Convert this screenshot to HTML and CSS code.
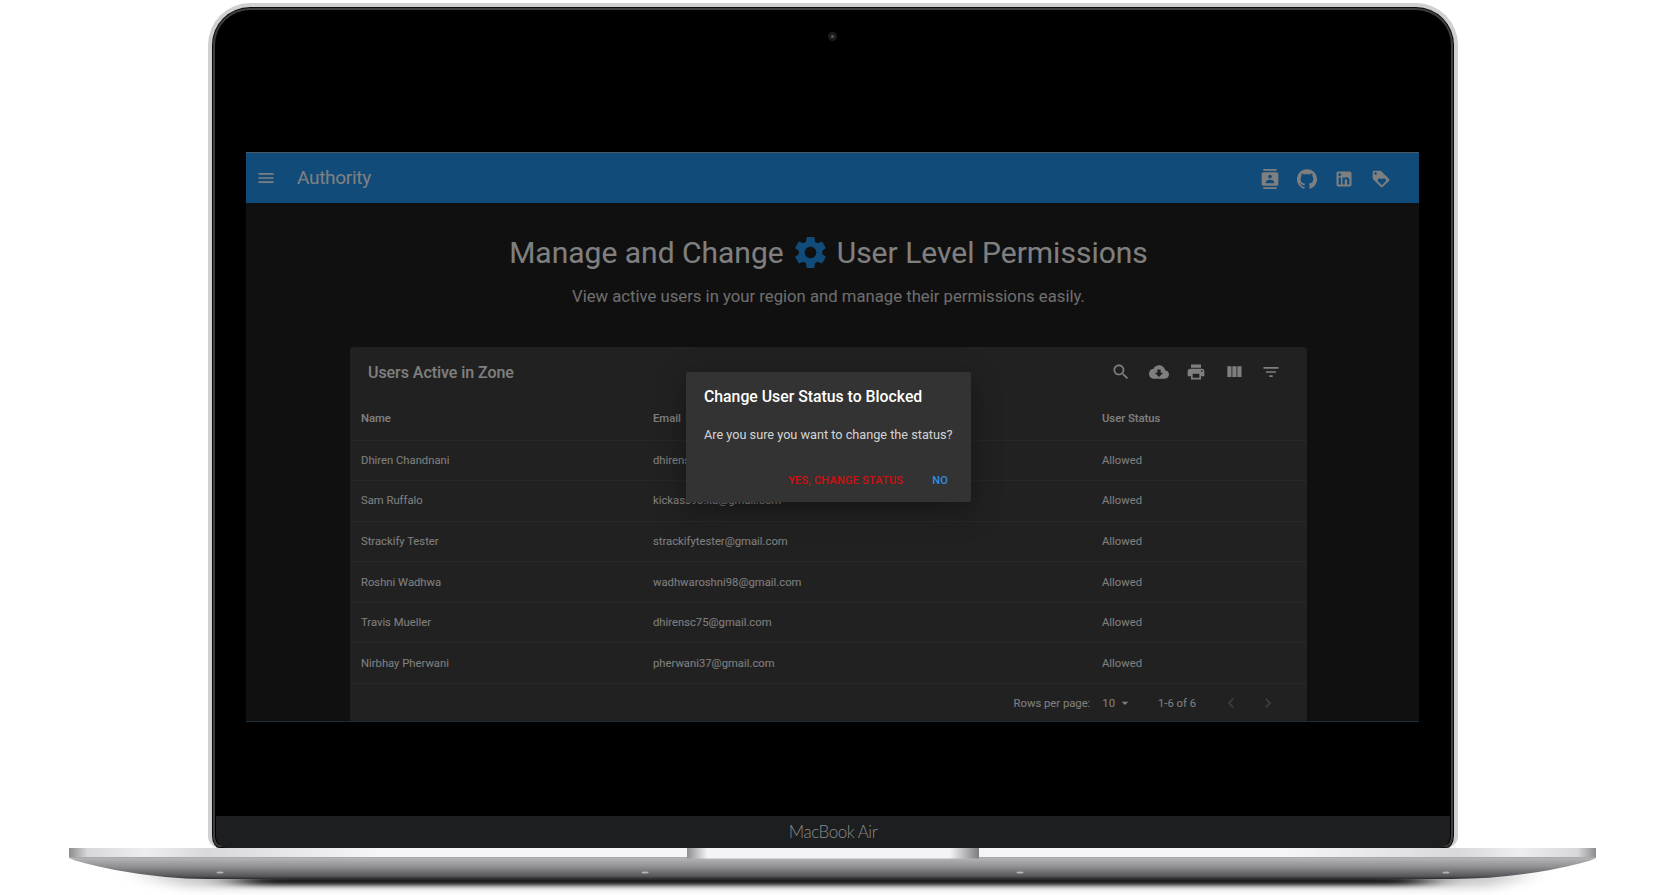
FILE: index.html
```html
<!DOCTYPE html>
<html lang="en">
<head>
  <meta charset="UTF-8">
  <meta name="viewport" content="width=device-width, initial-scale=1.0">
  <title>Authority</title>
  <link rel="stylesheet" href="styles.css">
</head>
<body>
  <div class="laptop">
    <div class="lid">
      <div class="bezel">
        <div class="camera"></div>
        <div class="app">
          <header class="appbar">
            <svg class="icon" viewBox="0 0 24 24"><path d="M3 18h18v-2H3v2zm0-5h18v-2H3v2zm0-7v2h18V6H3z"/></svg>
            <span class="brand">Authority</span>
            <nav class="appbar-links">
              <svg class="icon" viewBox="0 0 24 24"><path d="M20 0H4v2h16V0zM4 24h16v-2H4v2zM20 4H4c-1.1 0-2 .9-2 2v12c0 1.1.9 2 2 2h16c1.1 0 2-.9 2-2V6c0-1.1-.9-2-2-2zm-8 2.75c1.24 0 2.25 1.01 2.25 2.25s-1.01 2.25-2.25 2.25S9.75 10.24 9.75 9 10.76 6.75 12 6.75zM17 17H7v-1.5c0-1.67 3.33-2.5 5-2.5s5 .83 5 2.5V17z"/></svg>
              <svg class="icon" viewBox="0 0 24 24"><path d="M12 .3a12 12 0 0 0-3.8 23.4c.6.1.8-.3.8-.6v-2c-3.3.7-4-1.6-4-1.6-.6-1.4-1.4-1.8-1.4-1.8-1-.7.1-.7.1-.7 1.2 0 1.9 1.2 1.9 1.2 1 1.8 2.8 1.3 3.5 1 0-.8.4-1.3.7-1.6-2.7-.3-5.5-1.3-5.5-6 0-1.2.5-2.3 1.3-3.1-.2-.4-.6-1.6 0-3.2 0 0 1-.3 3.4 1.2a11.5 11.5 0 0 1 6 0c2.3-1.5 3.3-1.2 3.3-1.2.6 1.6.2 2.8 0 3.2.9.8 1.3 1.9 1.3 3.2 0 4.6-2.8 5.6-5.5 5.9.5.4.9 1 .9 2.2v3.3c0 .3.1.7.8.6A12 12 0 0 0 12 .3"/></svg>
              <svg class="icon" viewBox="0 0 24 24"><path d="M19 3a2 2 0 0 1 2 2v14a2 2 0 0 1-2 2H5a2 2 0 0 1-2-2V5a2 2 0 0 1 2-2h14m-.5 15.5v-5.3a3.26 3.26 0 0 0-3.26-3.26c-.85 0-1.84.52-2.32 1.3v-1.11h-2.79v8.37h2.79v-4.93c0-.77.62-1.4 1.39-1.4a1.4 1.4 0 0 1 1.4 1.4v4.93h2.79M6.88 8.56a1.68 1.68 0 0 0 1.68-1.68c0-.93-.75-1.69-1.68-1.69a1.69 1.69 0 0 0-1.69 1.69c0 .93.76 1.68 1.69 1.68m1.39 9.94v-8.37H5.5v8.37h2.77z"/></svg>
              <svg class="icon" viewBox="0 0 24 24"><path d="M21.41 11.58l-9-9C12.05 2.22 11.55 2 11 2H4c-1.1 0-2 .9-2 2v7c0 .55.22 1.05.59 1.42l9 9c.36.36.86.58 1.41.58.55 0 1.05-.22 1.41-.59l7-7c.37-.36.59-.86.59-1.41 0-.55-.23-1.06-.59-1.42zM5.5 7C4.67 7 4 6.33 4 5.5S4.67 4 5.5 4 7 4.67 7 5.5 6.33 7 5.5 7zm11.77 8.27L13 19.54l-4.27-4.27C8.28 14.81 8 14.19 8 13.5c0-1.38 1.12-2.5 2.5-2.5.69 0 1.32.28 1.77.74l.73.72.73-.73c.45-.45 1.08-.73 1.77-.73 1.38 0 2.5 1.12 2.5 2.5 0 .69-.28 1.32-.73 1.77z"/></svg>
            </nav>
          </header>

          <main class="content">
            <h1 class="title">
              <span>Manage and Change</span>
              <svg class="gear" viewBox="0 0 24 24"><path d="M19.14 12.94c.04-.3.06-.61.06-.94 0-.32-.02-.64-.07-.94l2.03-1.58c.18-.14.23-.41.12-.61l-1.92-3.32c-.12-.22-.37-.29-.59-.22l-2.39.96c-.5-.38-1.03-.7-1.62-.94l-.36-2.54c-.04-.24-.24-.41-.48-.41h-3.84c-.24 0-.43.17-.47.41l-.36 2.54c-.59.24-1.13.57-1.62.94l-2.39-.96c-.22-.08-.47 0-.59.22L2.74 8.87c-.12.21-.08.47.12.61l2.03 1.58c-.05.3-.09.63-.09.94s.02.64.07.94l-2.03 1.58c-.18.14-.23.41-.12.61l1.92 3.32c.12.22.37.29.59.22l2.39-.96c.5.38 1.03.7 1.62.94l.36 2.54c.05.24.24.41.48.41h3.84c.24 0 .44-.17.47-.41l.36-2.54c.59-.24 1.13-.56 1.62-.94l2.39.96c.22.08.47 0 .59-.22l1.92-3.32c.12-.22.07-.47-.12-.61l-2.01-1.58zM12 15.6c-1.98 0-3.6-1.62-3.6-3.6s1.62-3.6 3.6-3.6 3.6 1.62 3.6 3.6-1.62 3.6-3.6 3.6z"/></svg>
              <span>User Level Permissions</span>
            </h1>
            <p class="subtitle">View active users in your region and manage their permissions easily.</p>

            <section class="card">
              <div class="toolbar">
                <h2 class="card-title">Users Active in Zone</h2>
                <div class="tools">
                  <svg class="icon" viewBox="0 0 24 24"><path d="M15.5 14h-.79l-.28-.27C15.41 12.59 16 11.11 16 9.5 16 5.91 13.09 3 9.5 3S3 5.91 3 9.5 5.91 16 9.5 16c1.61 0 3.09-.59 4.23-1.57l.27.28v.79l5 4.99L20.49 19l-4.99-5zm-6 0C7.01 14 5 11.99 5 9.5S7.01 5 9.5 5 14 7.01 14 9.5 11.99 14 9.5 14z"/></svg>
                  <svg class="icon" viewBox="0 0 24 24"><path d="M19.35 10.04C18.67 6.59 15.64 4 12 4 9.11 4 6.6 5.64 5.35 8.04 2.34 8.36 0 10.91 0 14c0 3.31 2.69 6 6 6h13c2.76 0 5-2.24 5-5 0-2.64-2.05-4.78-4.65-4.96zM17 13l-5 5-5-5h3V9h4v4h3z"/></svg>
                  <svg class="icon" viewBox="0 0 24 24"><path d="M19 8H5c-1.66 0-3 1.34-3 3v6h4v4h12v-4h4v-6c0-1.66-1.34-3-3-3zm-3 11H8v-5h8v5zm3-7c-.55 0-1-.45-1-1s.45-1 1-1 1 .45 1 1-.45 1-1 1zm-1-9H6v4h12V3z"/></svg>
                  <svg class="icon" viewBox="0 0 24 24"><path d="M10 18h5V5h-5v13zm-6 0h5V5H4v13zM16 5v13h5V5h-5z"/></svg>
                  <svg class="icon" viewBox="0 0 24 24"><path d="M10 18h4v-2h-4v2zM3 6v2h18V6H3zm3 7h12v-2H6v2z"/></svg>
                </div>
              </div>

              <table class="users">
                <thead>
                  <tr><th class="col-name">Name</th><th class="col-email">Email</th><th>User Status</th></tr>
                </thead>
                <tbody>
                  <tr><td>Dhiren Chandnani</td><td>dhirensc75@gmail.com</td><td>Allowed</td></tr>
                  <tr><td>Sam Ruffalo</td><td>kickass90.ka@gmail.com</td><td>Allowed</td></tr>
                  <tr><td>Strackify Tester</td><td>strackifytester@gmail.com</td><td>Allowed</td></tr>
                  <tr><td>Roshni Wadhwa</td><td>wadhwaroshni98@gmail.com</td><td>Allowed</td></tr>
                  <tr><td>Travis Mueller</td><td>dhirensc75@gmail.com</td><td>Allowed</td></tr>
                  <tr><td>Nirbhay Pherwani</td><td>pherwani37@gmail.com</td><td>Allowed</td></tr>
                </tbody>
              </table>

              <div class="pager">
                <span>Rows per page:</span>
                <span class="pager-size">10
                  <svg class="caret" viewBox="0 0 24 24"><path d="M7 10l5 5 5-5z"/></svg>
                </span>
                <span class="pager-range">1-6 of 6</span>
                <svg class="icon chevron" viewBox="0 0 24 24"><path d="M15.41 7.41L14 6l-6 6 6 6 1.41-1.41L10.83 12z"/></svg>
                <svg class="icon chevron" viewBox="0 0 24 24"><path d="M10 6L8.59 7.41 13.17 12l-4.58 4.59L10 18l6-6z"/></svg>
              </div>
            </section>
          </main>

          <div class="backdrop"></div>
          <div class="dialog">
            <h3 class="dialog-title">Change User Status to Blocked</h3>
            <p class="dialog-text">Are you sure you want to change the status?</p>
            <div class="dialog-actions">
              <span class="btn-danger">YES, CHANGE STATUS</span>
              <span class="btn-primary">NO</span>
            </div>
          </div>
        </div>
      </div>
      <div class="chin">MacBook Air</div>
    </div>

    <svg class="base" viewBox="0 0 1666 47">
      <defs>
        <linearGradient id="strip" x1="0" x2="1" y1="0" y2="0">
          <stop offset="0" stop-color="#8d8d8f"/>
          <stop offset=".012" stop-color="#d8d8da"/>
          <stop offset=".05" stop-color="#eeeef0"/>
          <stop offset=".09" stop-color="#d9d9db"/>
          <stop offset=".2" stop-color="#f5f5f7"/>
          <stop offset=".8" stop-color="#f5f5f7"/>
          <stop offset=".91" stop-color="#d9d9db"/>
          <stop offset=".95" stop-color="#eeeef0"/>
          <stop offset=".988" stop-color="#d8d8da"/>
          <stop offset="1" stop-color="#8d8d8f"/>
        </linearGradient>
        <linearGradient id="notch" x1="0" x2="1" y1="0" y2="0">
          <stop offset="0" stop-color="#8e8e90"/>
          <stop offset=".07" stop-color="#f4f4f6"/>
          <stop offset=".9" stop-color="#f4f4f6"/>
          <stop offset="1" stop-color="#7d7d7f"/>
        </linearGradient>
        <linearGradient id="body" x1="0" x2="0" y1="0" y2="1">
          <stop offset="0" stop-color="#bdbdbf"/>
          <stop offset=".45" stop-color="#929295"/>
          <stop offset=".88" stop-color="#555659"/>
          <stop offset="1" stop-color="#2a2a2c"/>
        </linearGradient>
        <filter id="soft-wide" filterUnits="userSpaceOnUse" x="0" y="0" width="1666" height="47">
          <feGaussianBlur stdDeviation="14 6"/>
        </filter>
        <filter id="soft" filterUnits="userSpaceOnUse" x="0" y="0" width="1666" height="47">
          <feGaussianBlur stdDeviation="20 2.500"/>
        </filter>
      </defs>
      <path d="M130 24 H1536 L1490 38 H190 Z" fill="#000" opacity=".25" filter="url(#soft-wide)"/>
      <rect x="240" y="29" width="1186" height="8" fill="#000" filter="url(#soft)" opacity=".95"/>
      <path d="M69 8 H1596 V10 Q1590 14 1550 22 Q1500 31 1451 31 H208 Q165 31 115 22 Q76 14 69 10 Z" fill="url(#body)"/>
      <rect x="69" y="0" width="1527" height="9.500" fill="url(#strip)"/>
      <rect x="69" y="9" width="1527" height="1" fill="#a9a9ab"/>
      <rect x="687" y="0" width="292" height="10.500" fill="url(#notch)"/>
      <g fill="#b4b4b6">
        <ellipse cx="220" cy="24.500" rx="3.500" ry="1"/>
        <ellipse cx="645" cy="24.500" rx="3.500" ry="1"/>
        <ellipse cx="1020" cy="24.500" rx="3.500" ry="1"/>
        <ellipse cx="1446" cy="24.500" rx="3.500" ry="1"/>
      </g>
    </svg>
  </div>
</body>
</html>
```

FILE: styles.css
```css
* {
  margin: 0;
  padding: 0;
  box-sizing: border-box;
}

body {
  background: #fff;
  font-family: Roboto, "Liberation Sans", sans-serif;
  overflow: hidden;
}

.laptop {
  width: 1666px;
  height: 895px;
  padding-top: 3px;
  display: flex;
  flex-direction: column;
  align-items: center;
}

/* Lid */
.lid {
  width: 1250px;
  height: 845px;
  display: flex;
  flex-direction: column;
  background: #000;
  border: 4px solid #d0d0d2;
  border-bottom: none;
  border-radius: 42px 42px 12px 12px;
  box-shadow: inset 0 0 0 1px #0a0a0a, inset 0 0 0 3px #3e3e40, inset 0 0 0 4px #000;
  overflow: hidden;
  flex-shrink: 0;
}

.bezel {
  position: relative;
  flex: 1;
  padding: 145px 35.500px 0 34px;
}

.camera {
  position: absolute;
  top: 24.500px;
  left: 616px;
  width: 9px;
  height: 9px;
  border-radius: 50%;
  background: radial-gradient(circle, #555 0 1px, #1c1c1c 2px);
}

.chin {
  margin: 0 4px;
  height: 32px;
  flex-shrink: 0;
  background: #1c1e1f;
  border-radius: 0 0 12px 12px;
  color: #8a8a8a;
  font-family: Lato, sans-serif;
  font-weight: 300;
  font-size: 17px;
  letter-spacing: -.5px;
  line-height: 32px;
  text-align: center;
}

.base {
  display: block;
  width: 1666px;
  height: 47px;
  flex-shrink: 0;
}

/* App inside the screen */
.app {
  position: relative;
  height: 570px;
  background: #212121;
  color: #fff;
  overflow: hidden;
  border-top: 1px solid #4b5a68;
  border-bottom: 1px solid #1e2c38;
}

.icon {
  display: block;
  width: 20px;
  height: 20px;
  fill: currentColor;
}

.appbar {
  display: flex;
  align-items: center;
  height: 50px;
  padding: 0 28px 0 10px;
  background: #2196f3;
}

.brand {
  margin: -1px 0 0 21px;
  font-size: 19px;
  letter-spacing: -.3px;
}

.appbar-links {
  display: flex;
  gap: 17px;
  margin: 2px 0 0 auto;
}

.content {
  padding-right: 7.500px;
  text-align: center;
}

.title {
  display: flex;
  align-items: center;
  justify-content: center;
  gap: 7px;
  margin-top: 29px;
  height: 40px;
  font-size: 30px;
  font-weight: 400;
}

.gear {
  width: 39px;
  height: 39px;
  fill: #2196f3;
}

.subtitle {
  margin-top: 13px;
  font-size: 16.700px;
  line-height: 24px;
  color: rgba(255, 255, 255, .85);
}

.card {
  width: 957px;
  margin: 38px auto 0;
  background: #424242;
  border-radius: 4px;
  text-align: left;
}

.toolbar {
  display: flex;
  align-items: center;
  justify-content: space-between;
  height: 50px;
  padding: 0 26px 0 18px;
}

.card-title {
  font-size: 16px;
  font-weight: 500;
  letter-spacing: -.05px;
}

.tools {
  display: flex;
  gap: 17.500px;
}

.users {
  width: 100%;
  border-collapse: collapse;
  table-layout: fixed;
  font-size: 11.250px;
}

.col-name {
  width: 292px;
}

.col-email {
  width: 449px;
}

.users th {
  height: 43px;
  padding: 0 11px;
  text-align: left;
  font-weight: 500;
  border-bottom: 1px solid #4f4f4f;
}

.users td {
  height: 40.600px;
  padding: 0 11px;
  border-bottom: 1px solid #4f4f4f;
}

.pager {
  display: flex;
  align-items: center;
  justify-content: flex-end;
  height: 38px;
  padding-right: 29px;
  font-size: 11.250px;
}

.pager-size {
  display: flex;
  align-items: center;
  margin-left: 12px;
}

.caret {
  width: 16px;
  height: 16px;
  margin-left: 2px;
  fill: currentColor;
}

.pager-range {
  margin-left: 25px;
}

.chevron {
  opacity: .3;
  margin-left: 25px;
}

.chevron:last-child {
  margin-left: 17px;
}

/* Dialog and its backdrop */
.backdrop {
  position: absolute;
  inset: 0;
  background: rgba(0, 0, 0, .5);
}

.dialog {
  position: absolute;
  top: 219px;
  left: 440px;
  width: 285px;
  height: 130px;
  padding: 15px 18px 0;
  background: #333;
  border-radius: 2px;
  box-shadow: 0 8px 30px rgba(0, 0, 0, .35);
}

.dialog-title {
  font-size: 15.800px;
  font-weight: 500;
  line-height: 20px;
}

.dialog-text {
  margin-top: 20px;
  font-size: 12.700px;
  line-height: 16px;
  color: rgba(255, 255, 255, .8);
  white-space: nowrap;
}

.dialog-actions {
  display: flex;
  justify-content: flex-end;
  gap: 29px;
  margin-top: 31px;
  padding-right: 5px;
  font-size: 11px;
  font-weight: 500;
  line-height: 14px;
  letter-spacing: .2px;
}

.btn-danger {
  color: #d10f0f;
}

.btn-primary {
  color: #2f8fe6;
}
```
